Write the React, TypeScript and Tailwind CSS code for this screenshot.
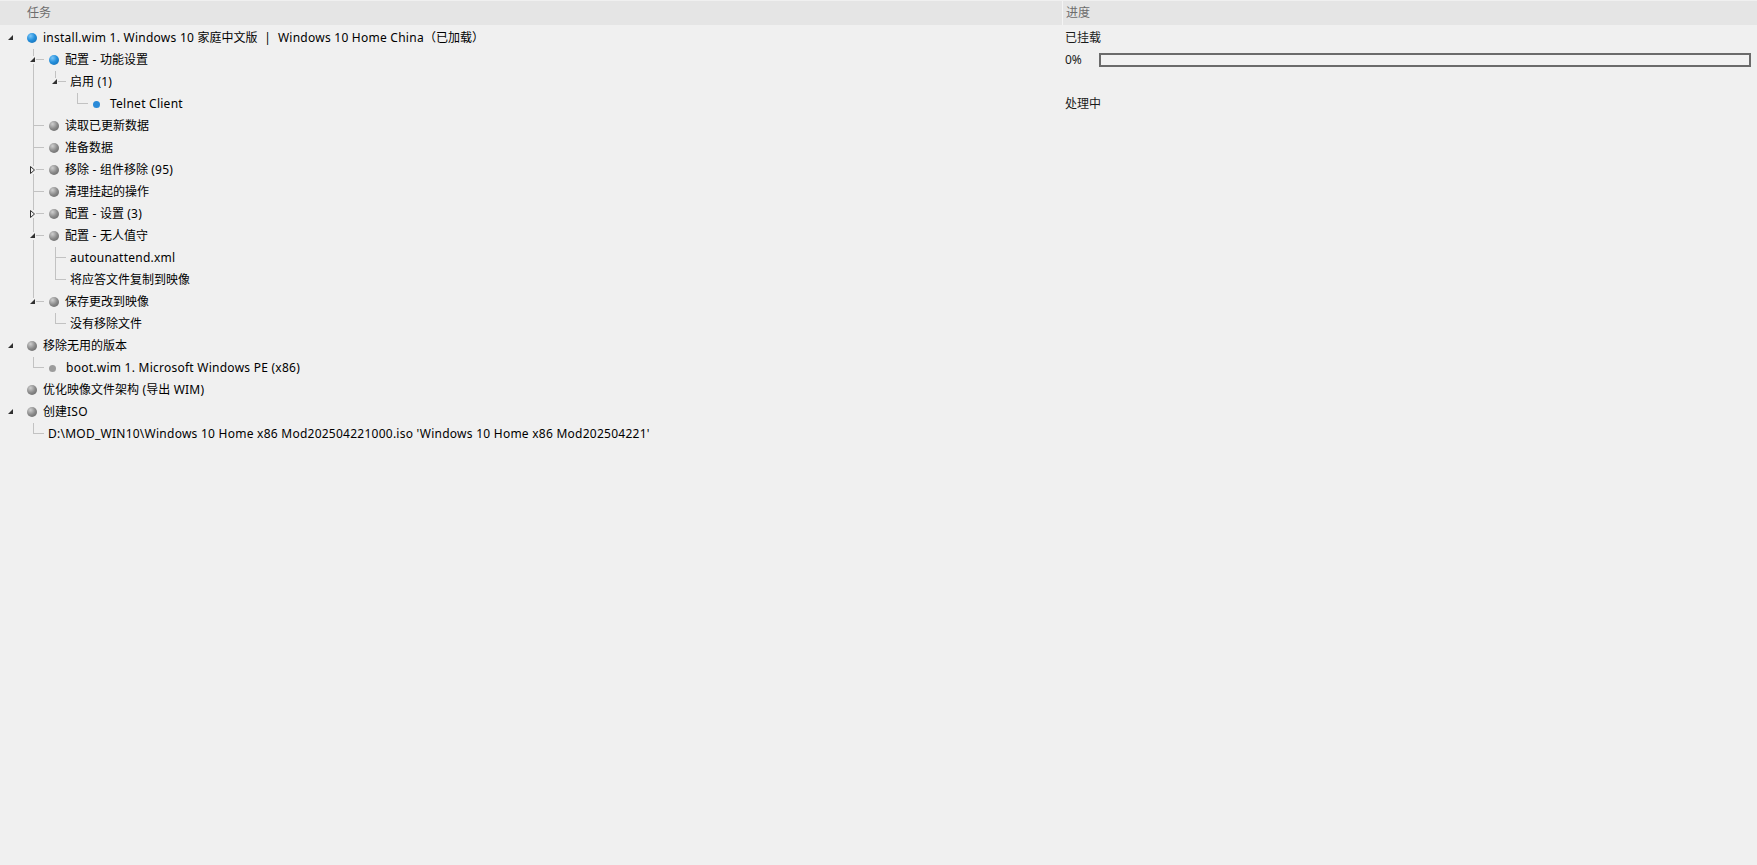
import React from 'react';

type Bullet = 'blue' | 'gray' | 'blue-sm' | 'gray-sm';

interface TaskNode {
  text: string;
  bullet?: Bullet;
  state?: 'open' | 'closed';
  right?: React.ReactNode;
  children?: TaskNode[];
}

interface FlatRow {
  node: TaskNode;
  level: number;
  // for each ancestor column 1..level-1: does the line continue
  guides: boolean[];
  isLast: boolean;
}

const LINE = '#c2c2c2';
const BG = '#f0f0f0';

const ProgressCell = () => (
  <div className="flex items-center h-full">
    <span className="w-[34px]">0%</span>
    <div className="w-[652px] h-[14px] border-2 border-[#6b6b6b] bg-[#f2f2f2]" />
  </div>
);

const tasks: TaskNode[] = [
  {
    text: 'install.wim 1. Windows 10 家庭中文版  |  Windows 10 Home China（已加载）',
    bullet: 'blue',
    state: 'open',
    right: '已挂载',
    children: [
      {
        text: '配置 - 功能设置',
        bullet: 'blue',
        state: 'open',
        right: <ProgressCell />,
        children: [
          {
            text: '启用 (1)',
            state: 'open',
            children: [{ text: 'Telnet Client', bullet: 'blue-sm', right: '处理中' }],
          },
        ],
      },
      { text: '读取已更新数据', bullet: 'gray' },
      { text: '准备数据', bullet: 'gray' },
      { text: '移除 - 组件移除 (95)', bullet: 'gray', state: 'closed' },
      { text: '清理挂起的操作', bullet: 'gray' },
      { text: '配置 - 设置 (3)', bullet: 'gray', state: 'closed' },
      {
        text: '配置 - 无人值守',
        bullet: 'gray',
        state: 'open',
        children: [{ text: 'autounattend.xml' }, { text: '将应答文件复制到映像' }],
      },
      {
        text: '保存更改到映像',
        bullet: 'gray',
        state: 'open',
        children: [{ text: '没有移除文件' }],
      },
    ],
  },
  {
    text: '移除无用的版本',
    bullet: 'gray',
    state: 'open',
    children: [{ text: 'boot.wim 1. Microsoft Windows PE (x86)', bullet: 'gray-sm' }],
  },
  { text: '优化映像文件架构 (导出 WIM)', bullet: 'gray' },
  {
    text: '创建ISO',
    bullet: 'gray',
    state: 'open',
    children: [
      {
        text: "D:\\MOD_WIN10\\Windows 10 Home x86 Mod202504221000.iso 'Windows 10 Home x86 Mod202504221'",
      },
    ],
  },
];

function flatten(nodes: TaskNode[], level: number, guides: boolean[], out: FlatRow[]) {
  nodes.forEach((node, i) => {
    const isLast = i === nodes.length - 1;
    out.push({ node, level, guides, isLast });
    if (node.children && node.state === 'open') {
      const next = level >= 1 ? [...guides, !isLast] : guides;
      flatten(node.children, level + 1, next, out);
    }
  });
  return out;
}

// latin runs get a touch of tracking so they sit as wide as the original UI font
const MixedText = ({ text }: { text: string }) => (
  <>
    {text.split(/([\u3000-\u9fff\uff00-\uffef]+)/).map((part, i) =>
      i % 2 === 1 ? (
        <span key={i}>{part}</span>
      ) : (
        <span key={i} className="tracking-[0.25px]">
          {part}
        </span>
      )
    )}
  </>
);

// guide column of an ancestor: a plain vertical line
const GuideCell = ({ on }: { on: boolean }) => (
  <svg width="22" height="22" className="shrink-0 block">
    {on && <line x1="11.5" y1="0" x2="11.5" y2="22" stroke={LINE} />}
  </svg>
);

// own expander column: connector + triangle
const ExpanderCell = ({ level, isLast, state }: { level: number; isLast: boolean; state?: 'open' | 'closed' }) => (
  <svg width="22" height="22" className="shrink-0 block">
    {level > 0 && (
      <>
        {state ? (
          <>
            <line x1="11.5" y1="0" x2="11.5" y2="7" stroke={LINE} />
            {!isLast && <line x1="11.5" y1="15" x2="11.5" y2="22" stroke={LINE} />}
            <line x1="14" y1="10.5" x2="22" y2="10.5" stroke={LINE} />
          </>
        ) : (
          <>
            <line x1="11.5" y1="0" x2="11.5" y2={isLast ? 11 : 22} stroke={LINE} />
            <line x1="12" y1="10.5" x2="22" y2="10.5" stroke={LINE} />
          </>
        )}
      </>
    )}
    {state === 'open' && <polygon points="13,8 13,13 8,13" fill="#303030" />}
    {state === 'closed' && (
      <polygon points="8.5,7.5 8.5,14.5 12.5,11" fill={BG} stroke="#303030" strokeLinejoin="miter" />
    )}
  </svg>
);

const BulletDot = ({ kind }: { kind?: Bullet }) => {
  if (kind === 'blue')
    return (
      <span className="ml-[5px] w-[10px] h-[10px] shrink-0 rounded-full bg-[radial-gradient(circle_at_35%_30%,#7cc6f7_0%,#2590dc_45%,#1268ad_100%)]" />
    );
  if (kind === 'gray')
    return (
      <span className="ml-[5px] w-[10px] h-[10px] shrink-0 rounded-full bg-[radial-gradient(circle_at_35%_30%,#cfcfcf_0%,#8a8a8a_50%,#5e5e5e_100%)]" />
    );
  if (kind === 'blue-sm')
    return <span className="ml-[5px] w-[7px] h-[7px] shrink-0 rounded-full bg-[#2a8ad8]" />;
  if (kind === 'gray-sm')
    return <span className="ml-[5px] w-[7px] h-[7px] shrink-0 rounded-full bg-[#9c9c9c]" />;
  return null;
};

const textGap = (kind?: Bullet) => {
  if (kind === 'blue' || kind === 'gray') return 'ml-[6px]';
  if (kind === 'blue-sm' || kind === 'gray-sm') return 'ml-[10px]';
  return 'ml-[4px]';
};

const Row = ({ row }: { row: FlatRow }) => {
  const { node, level, guides, isLast } = row;
  return (
    <div className="flex h-[22px]">
      <div className="flex items-center w-[1063px] shrink-0">
        {level > 0 && <GuideCell on={false} />}
        {guides.map((g, i) => (
          <GuideCell key={i} on={g} />
        ))}
        <ExpanderCell level={level} isLast={isLast} state={node.state} />
        <BulletDot kind={node.bullet} />
        <span className={`${textGap(node.bullet)} whitespace-pre text-black`}>
          <MixedText text={node.text} />
        </span>
      </div>
      <div className="flex-1 flex items-center pl-[2px] text-[#1a1a1a]">{node.right}</div>
    </div>
  );
};

export default function App() {
  const rows = flatten(tasks, 0, [], []);
  return (
    <div
      className="w-full h-[865px] bg-[#f0f0f0] text-[12px] leading-[22px] overflow-hidden"
      style={{ fontFamily: '"Segoe UI", "Noto Sans", "Noto Sans CJK SC", sans-serif' }}
    >
      <div className="flex h-[25px] border-t border-[#f0f0f0] bg-[#e5e5e5] text-[#6d6d6d] leading-[24px]">
        <div className="w-[1062px] shrink-0 pl-[27px]">任务</div>
        <div className="w-px bg-[#f4f4f4]" />
        <div className="flex-1 pl-[3px]">进度</div>
      </div>
      <div className="pt-[2px]">
        {rows.map((r, i) => (
          <Row key={i} row={r} />
        ))}
      </div>
    </div>
  );
}
